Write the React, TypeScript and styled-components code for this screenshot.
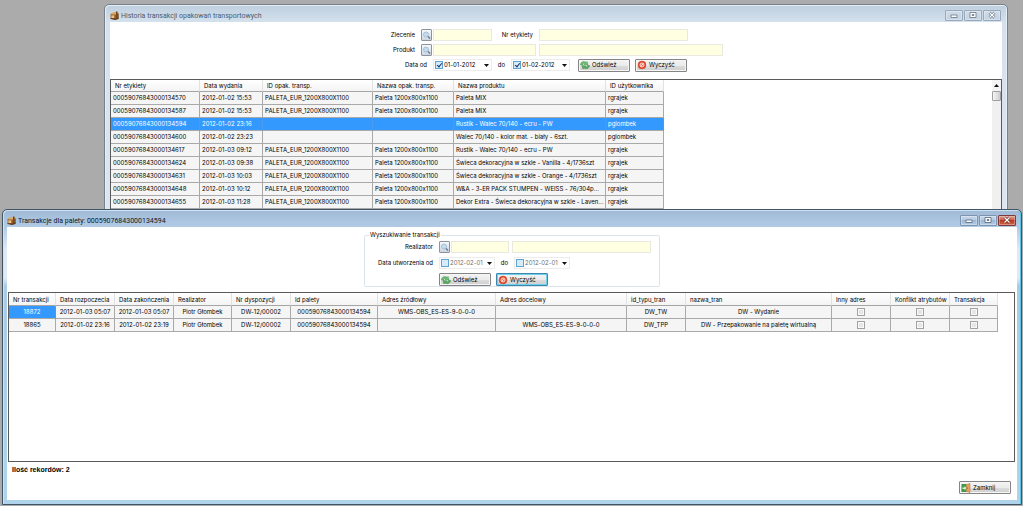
import React from "react";
import styled, { createGlobalStyle, css } from "styled-components";

const GlobalStyle = createGlobalStyle`
  *, *::before, *::after { box-sizing: border-box; }
  body { margin: 0; background: #ababab; }
  body, input, button, table, legend, label {
    font-family: Inter, "Liberation Sans", sans-serif;
    font-size: 6px;
    line-height: 12px;
    font-variant-ligatures: no-contextual;
    color: #000;
  }
`;

const Desktop = styled.div`
  position: relative;
  min-height: max(100vh, 400px);
  overflow: hidden;
`;

const Window = styled.section<{ $active?: boolean }>`
  position: absolute;
  display: flex;
  flex-direction: column;
  border: 1px solid ${(p) => (p.$active ? "#3f5566" : "#75808b")};
  border-radius: 5px 5px 0 0;
  padding: 0 4px 4px;
  background: ${(p) =>
    p.$active
      ? "linear-gradient(#a0bad6 0, #b3cce6 18px, #dfeaf6 40px, #dfeaf6 68px, #a9cbe6 76px, #b0d3ec 100%)"
      : "linear-gradient(#bfcfdf 0, #d5e2ee 18px, #dbe6f1 100%)"};
  box-shadow: inset 1px 1px 0 ${(p) => (p.$active ? "#cfe2f3" : "#e6eef6")}, inset -1px 0 0 ${(p) => (p.$active ? "#5cc3e6" : "#e6eef6")};
`;

const HistoryWindow = styled(Window)`
  top: 4px;
  left: 104px;
  right: 15px;
  padding: 0 5px 5px;
`;

const PalletWindow = styled(Window)`
  top: 209px;
  left: 2px;
  right: 1px;
  bottom: 1px;
`;

const TitleBar = styled.header`
  display: flex;
  align-items: center;
  gap: 2px;
  height: 17px;
`;

const Title = styled.h1<{ $active?: boolean }>`
  flex: 1;
  margin: 0;
  padding-top: 4px;
  font: 400 7px/12px Roboto, "Open Sans", sans-serif;
  color: ${(p) => (p.$active ? "#10161e" : "#4d5a68")};
  white-space: nowrap;
`;

const AppIcon = styled.svg`
  width: 9px;
  height: 9px;
  margin-top: 4px;
  flex: none;
`;

const Controls = styled.div`
  display: flex;
  gap: 1px;
  padding: 3px 1px 0 0;
`;

const ControlButton = styled.button<{ $active?: boolean; $close?: boolean }>`
  display: flex;
  align-items: center;
  justify-content: center;
  width: 18px;
  height: 11px;
  padding: 0;
  border: 1px solid ${(p) => (p.$active ? (p.$close ? "#7d3a3a" : "#7c94b0") : "#98a9bc")};
  border-radius: 1px;
  background: ${(p) =>
    p.$active
      ? p.$close
        ? "linear-gradient(#dc9c90, #c9604c 45%, #b83a20 50%, #d0664a)"
        : "linear-gradient(#c6d7ea, #b4c9e0 45%, #9cb7d4 50%, #b4cce4)"
      : "linear-gradient(#cfdbe8, #c3d2e2)"};
  box-shadow: inset 0 0 0 1px rgba(255, 255, 255, 0.3);
  svg { width: 10px; height: 8px; }
`;

const Client = styled.div`
  flex: 1;
  display: flex;
  flex-direction: column;
  min-height: 0;
  background: #fff;
`;

const Filters = styled.form`
  display: grid;
  gap: 3px;
  width: 332px;
  margin: 0 auto;
  padding: 7px 0 8px;
`;

const Row = styled.div`
  display: flex;
  align-items: center;
  height: 12px;
`;

const Label = styled.label<{ $w: number }>`
  flex: none;
  width: ${(p) => p.$w}px;
  padding-right: 6px;
  text-align: right;
  white-space: nowrap;
`;

const TextField = styled.input<{ $w: number }>`
  flex: none;
  width: ${(p) => p.$w}px;
  height: 12px;
  margin-right: 3px;
  padding: 0 2px;
  border: 1px solid #e9e9e0;
  background: #ffffe1;
`;

const LookupButton = styled.button`
  flex: none;
  width: 11px;
  height: 12px;
  margin-right: 1px;
  padding: 0;
  border: 1px solid #8d949c;
  border-radius: 1px;
  background: linear-gradient(#f6f8fa, #ccd6e2);
  svg { display: block; width: 9px; height: 10px; }
`;

const DateBox = styled.div<{ $w: number }>`
  display: flex;
  align-items: center;
  flex: none;
  width: ${(p) => p.$w}px;
  height: 12px;
  padding-left: 1px;
  border: 1px solid #ececec;
  background: #fff;
`;

const DateText = styled.input`
  flex: 1;
  min-width: 0;
  height: 10px;
  padding: 0 0 0 1px;
  border: 0;
  background: none;
  line-height: 10px;
  &:disabled { color: #707070; }
`;

const Tick = styled.input<{ $plain?: boolean }>`
  appearance: none;
  position: relative;
  display: block;
  flex: none;
  width: 8px;
  height: 8px;
  margin: 0;
  border: 1px solid ${(p) => (p.$plain ? "#a2a2a2" : "#5fa3d3")};
  background: ${(p) => (p.$plain ? "#e6e6e6" : "#d6ecfa")};
  ${(p) => p.$plain && css`
    margin: 0 auto;
    box-shadow: inset 0 0 0 1px #f8f8f8;
  `}
  &:checked::after {
    content: "";
    position: absolute;
    left: 2px;
    top: 0;
    width: 3px;
    height: 5px;
    border: solid #16306c;
    border-width: 0 1px 1px 0;
    transform: rotate(40deg);
  }
`;

const DropButton = styled.button`
  display: flex;
  align-items: center;
  justify-content: center;
  width: 9px;
  height: 10px;
  padding: 0;
  border: 0;
  background: none;
  svg { width: 5px; height: 3px; }
`;

const Until = styled.span`
  flex: none;
  width: 19px;
  text-align: center;
`;

const CommandButton = styled.button<{ $focused?: boolean }>`
  display: flex;
  align-items: center;
  flex: none;
  gap: 2px;
  width: 52px;
  height: 13px;
  padding: 0 2px 0 1px;
  border: 1px solid ${(p) => (p.$focused ? "#3b87ad" : "#858585")};
  border-radius: 1px;
  background: linear-gradient(#f3f3f3, #ebebeb 50%, #dcdcdc 52%, #cfcfcf);
  box-shadow: inset 0 0 0 1px ${(p) => (p.$focused ? "#6fd0ee" : "#f6f6f6")};
  line-height: 10px;
  svg { width: 10px; height: 10px; flex: none; }
`;

const Commands = styled.div`
  display: flex;
  gap: 5px;
`;

const DateCommands = styled(Commands)`
  margin-left: 8px;
`;

const GridFrame = styled.div`
  flex: 1;
  display: flex;
  justify-content: space-between;
  min-height: 140px;
  border: 1px solid #5a5a5a;
  background: #fff;
  overflow: hidden;
`;

const PalletGridFrame = styled(GridFrame)`
  min-height: 60px;
  margin: 0 2px 0 1px;
`;

const DataTable = styled.table<{ $centered?: boolean }>`
  flex: none;
  align-self: flex-start;
  table-layout: fixed;
  border-collapse: separate;
  border-spacing: 0;
  width: 0;
  td {
    padding: ${(p) => (p.$centered ? "0 1px" : "0 0 0 2px")};
    text-align: ${(p) => (p.$centered ? "center" : "left")};
  }
`;

const HeadCell = styled.th<{ $w: number; $h: number }>`
  width: ${(p) => p.$w}px;
  height: ${(p) => p.$h}px;
  padding: 0 0 0 4px;
  border-right: 1px solid #e2e2e2;
  border-bottom: 1px solid #a5a5a5;
  background: linear-gradient(#fff, #f4f4f4);
  font-weight: 400;
  line-height: 11px;
  text-align: left;
  white-space: nowrap;
`;

const Cell = styled.td<{ $selected?: boolean }>`
  height: 13px;
  border-right: 1px solid #a9a9a9;
  border-bottom: 1px solid #a9a9a9;
  background: #f5f5f5;
  overflow: hidden;
  white-space: nowrap;
  ${(p) => p.$selected && css`
    background: #3399ff;
    color: #fff;
    border-right-color: #4a9af0;
  `}
`;

const ScrollBar = styled.div`
  flex: none;
  width: 9px;
  background: #f0f0f0;
`;

const ScrollArrow = styled.button`
  display: flex;
  align-items: center;
  justify-content: center;
  width: 9px;
  height: 11px;
  padding: 0;
  border: 0;
  background: #f4f4f4;
  svg { width: 5px; height: 3px; }
`;

const ScrollThumb = styled.div`
  height: 10px;
  border: 1px solid #a0a0a0;
  border-radius: 1px;
  background: linear-gradient(90deg, #f5f5f5, #cfcfcf);
`;

const SearchGroup = styled.fieldset`
  width: 296px;
  min-width: 0;
  margin: 2px auto 5px;
  padding: 0;
  border: 1px solid #dce3ea;
  border-radius: 2px;
  legend {
    margin-left: 4px;
    padding: 0 1px;
  }
`;

const SearchRows = styled.div`
  display: grid;
  gap: 4px;
`;

const ButtonRow = styled(Commands)`
  padding-left: 74px;
`;

const Footer = styled.footer`
  display: flex;
  justify-content: space-between;
  align-items: flex-end;
  padding: 2px 6px 6px 5px;
  height: 38px;
`;

const RecordCount = styled.strong`
  align-self: flex-start;
  font: 700 7px/12px "Liberation Sans", sans-serif;
`;

const PackageIcon = () => (
  <AppIcon viewBox="0 0 18 18" aria-hidden="true">
    <path d="M1 6l8-3 8 1v11l-7 2-9-2z" fill="#a8743c" />
    <path d="M11 7l6-2v10l-6 2z" fill="#7b4a20" />
    <path d="M1 6l7-4 9 2-6 3z" fill="#dda968" />
    <path d="M3 9h5v5H3z" fill="#e9c48e" />
    <path d="M12 1h3v6h-3z" fill="#6c4119" />
    <path d="M1 14l10 1 6-2v3l-7 2-9-2z" fill="#5f3b1b" />
  </AppIcon>
);

const RefreshIcon = () => (
  <svg viewBox="0 0 20 20" aria-hidden="true">
    <path d="M1 10C1 4 8 1 12 5l2-2 2 7-8-1 2-2C8 6 6 7 5 10z" fill="#6cc072" stroke="#3f8f46" strokeWidth="1" />
    <path d="M19 11c0 6-7 8-11 5l-2 2-2-7 8 1-2 2c3 1 4 0 5-3z" fill="#58b05f" stroke="#35813d" strokeWidth="1" />
  </svg>
);

const ClearIcon = () => (
  <svg viewBox="0 0 20 20" aria-hidden="true">
    <circle cx="10" cy="10" r="8" fill="#e2482d" stroke="#cf4a33" />
    <circle cx="10" cy="10" r="4" fill="#f0755a" stroke="#fbd9d0" strokeWidth="2" />
    <path d="M7 13l6-6" stroke="#fbd9d0" strokeWidth="2" />
  </svg>
);

const ExitIcon = () => (
  <svg viewBox="0 0 20 20" aria-hidden="true">
    <path d="M1 2h10v16H1z" fill="#3c9a48" />
    <path d="M3 9h4V6l4 4-4 5v-3H3z" fill="#d4f2cf" />
    <path d="M11 3l7-2v18l-7-2z" fill="#e8a05c" stroke="#b96f2c" />
    <circle cx="13" cy="10" r="1" fill="#7c4413" />
  </svg>
);

const Lookup = ({ label }: { label: string }) => (
  <LookupButton type="button" aria-label={label}>
    <svg viewBox="0 0 18 20" aria-hidden="true">
      <circle cx="8" cy="9" r="5" fill="#c4dcf0" stroke="#a9bfd4" strokeWidth="2" />
      <path d="M12 13l4 4" stroke="#66788c" strokeWidth="3" />
    </svg>
  </LookupButton>
);

const Triangle = ({ up }: { up?: boolean }) => (
  <svg viewBox="0 0 10 6" aria-hidden="true">
    <path d={up ? "M0 6h10L5 0z" : "M0 0h10L5 6z"} fill="#111" />
  </svg>
);

const WindowControls = ({ active }: { active?: boolean }) => {
  const line = active ? "#4b5c70" : "#5e6d7e";
  return (
    <Controls>
      <ControlButton type="button" $active={active} aria-label="Minimalizuj">
        <svg viewBox="0 0 20 16" aria-hidden="true">
          <path d="M4 8h12v5H4z" fill="#fff" stroke={line} strokeWidth="1.500" />
        </svg>
      </ControlButton>
      <ControlButton type="button" $active={active} aria-label="Maksymalizuj">
        <svg viewBox="0 0 20 16" aria-hidden="true">
          <path d="M4 3h12v10H4z" fill="#fff" stroke={line} strokeWidth="1.500" />
          <path d="M8 7h4v2H8z" fill={line} stroke={line} />
        </svg>
      </ControlButton>
      <ControlButton type="button" $active={active} $close aria-label="Zamknij okno">
        <svg viewBox="0 0 20 16" aria-hidden="true">
          <path d="M5 3l10 10M15 3L5 13" stroke={active ? "#6b2a20" : line} strokeWidth="5" />
          <path d="M5 3l10 10M15 3L5 13" stroke="#fff" strokeWidth="2.500" />
        </svg>
      </ControlButton>
    </Controls>
  );
};

interface DateFieldProps {
  id: string;
  value: string;
  width: number;
  enabled?: boolean;
  label?: string;
}

const DateField = ({ id, value, width, enabled, label }: DateFieldProps) => (
  <DateBox $w={width}>
    <Tick type="checkbox" defaultChecked={enabled} aria-label={`Użyj daty ${value}`} />
    <DateText id={id} defaultValue={value} disabled={!enabled} aria-label={label} />
    <DropButton type="button" aria-label="Otwórz kalendarz">
      <Triangle />
    </DropButton>
  </DateBox>
);

const historyColumns: [string, number][] = [
  ["Nr etykiety", 89],
  ["Data wydania", 63],
  ["ID opak. transp.", 110],
  ["Nazwa opak. transp.", 81],
  ["Nazwa produktu", 152],
  ["ID użytkownika", 58],
];

const EUR = "PALETA_EUR_1200X800X1100";
const PAL = "Paleta 1200x800x1100";

const historyRows = [
  ["00059076843000134570", "2012-01-02 15:53", EUR, PAL, "Paleta MIX", "rgrajek"],
  ["00059076843000134587", "2012-01-02 15:53", EUR, PAL, "Paleta MIX", "rgrajek"],
  ["00059076843000134594", "2012-01-02 23:16", "", "", "Rustik - Walec 70/140 - ecru - PW", "pglombek"],
  ["00059076843000134600", "2012-01-02 23:23", "", "", "Walec 70/140 - kolor mat. - biały - 6szt.", "pglombek"],
  ["00059076843000134617", "2012-01-03 09:12", EUR, PAL, "Rustik - Walec 70/140 - ecru - PW", "rgrajek"],
  ["00059076843000134624", "2012-01-03 09:38", EUR, PAL, "Świeca dekoracyjna w szkle - Vanilla - 4/1736szt", "rgrajek"],
  ["00059076843000134631", "2012-01-03 10:03", EUR, PAL, "Świeca dekoracyjna w szkle - Orange - 4/1736szt", "rgrajek"],
  ["00059076843000134648", "2012-01-03 10:12", EUR, PAL, "W&A - 3-ER PACK STUMPEN - WEISS - 76/304p...", "rgrajek"],
  ["00059076843000134655", "2012-01-03 11:28", EUR, PAL, "Dekor Extra - Świeca dekoracyjna w szkle - Laven...", "rgrajek"],
];

const palletColumns: [string, number][] = [
  ["Nr transakcji", 47],
  ["Data rozpoczecia", 59],
  ["Data zakończenia", 59],
  ["Realizator", 58],
  ["Nr dyspozycji", 59],
  ["Id palety", 87],
  ["Adres źródłowy", 118],
  ["Adres docelowy", 131],
  ["id_typu_tran", 59],
  ["nazwa_tran", 146],
  ["Inny adres", 59],
  ["Konflikt atrybutów", 59],
  ["Transakcja", 48],
];

const palletRows = [
  ["18872", "2012-01-03 05:07", "2012-01-03 05:07", "Piotr Głombek", "DW-12/00002", "00059076843000134594", "WMS-OBS_ES-ES-9-0-0-0", "", "DW_TW", "DW - Wydanie"],
  ["18865", "2012-01-02 23:16", "2012-01-02 23:19", "Piotr Głombek", "DW-12/00002", "00059076843000134594", "", "WMS-OBS_ES-ES-9-0-0-0", "DW_TPP", "DW - Przepakowanie na paletę wirtualną"],
];

const Head = ({ columns, height }: { columns: [string, number][]; height: number }) => (
  <thead>
    <tr>
      {columns.map(([name, width]) => (
        <HeadCell key={name} scope="col" $w={width} $h={height}>
          {name}
        </HeadCell>
      ))}
    </tr>
  </thead>
);

const History = () => (
  <HistoryWindow>
    <TitleBar>
      <PackageIcon />
      <Title>Historia transakcji opakowań transportowych</Title>
      <WindowControls />
    </TitleBar>
    <Client>
      <Filters>
        <Row>
          <Label $w={31} htmlFor="order">Zlecenie</Label>
          <Lookup label="Szukaj zlecenia" />
          <TextField id="order" $w={59} />
          <Label $w={44} htmlFor="tag">Nr etykiety</Label>
          <TextField id="tag" $w={149} />
        </Row>
        <Row>
          <Label $w={31} htmlFor="product">Produkt</Label>
          <Lookup label="Szukaj produktu" />
          <TextField id="product" $w={103} />
          <TextField $w={184} aria-label="Nazwa produktu" />
        </Row>
        <Row>
          <Label $w={43} htmlFor="from">Data od</Label>
          <DateField id="from" value="01-01-2012" width={59} enabled />
          <Until>do</Until>
          <DateField id="to" value="01-02-2012" width={59} enabled label="Data do" />
          <DateCommands>
            <CommandButton type="button"><RefreshIcon />Odśwież</CommandButton>
            <CommandButton type="button"><ClearIcon />Wyczyść</CommandButton>
          </DateCommands>
        </Row>
      </Filters>
      <GridFrame>
        <DataTable>
          <Head columns={historyColumns} height={12} />
          <tbody>
            {historyRows.map((row, r) => (
              <tr key={row[0]}>
                {row.map((text, c) => (
                  <Cell key={c} $selected={r === 2}>{text}</Cell>
                ))}
              </tr>
            ))}
          </tbody>
        </DataTable>
        <ScrollBar>
          <ScrollArrow type="button" aria-label="Przewiń w górę"><Triangle up /></ScrollArrow>
          <ScrollThumb />
        </ScrollBar>
      </GridFrame>
    </Client>
  </HistoryWindow>
);

const Pallet = () => (
  <PalletWindow $active>
    <TitleBar>
      <PackageIcon />
      <Title $active>Transakcje dla palety: 00059076843000134594</Title>
      <WindowControls active />
    </TitleBar>
    <Client>
      <SearchGroup>
        <legend>Wyszukiwanie transakcji</legend>
        <SearchRows>
          <Row>
            <Label $w={74} htmlFor="person">Realizator</Label>
            <Lookup label="Szukaj realizatora" />
            <TextField id="person" $w={58} />
            <TextField $w={139} aria-label="Nazwa realizatora" />
          </Row>
          <Row>
            <Label $w={74} htmlFor="created-from">Data utworzenia od</Label>
            <DateField id="created-from" value="2012-02-01" width={56} />
            <Until>do</Until>
            <DateField id="created-to" value="2012-02-01" width={56} label="Data utworzenia do" />
          </Row>
          <ButtonRow>
            <CommandButton type="button"><RefreshIcon />Odśwież</CommandButton>
            <CommandButton type="button" $focused><ClearIcon />Wyczyść</CommandButton>
          </ButtonRow>
        </SearchRows>
      </SearchGroup>
      <PalletGridFrame>
        <DataTable $centered>
          <Head columns={palletColumns} height={13} />
          <tbody>
            {palletRows.map((row, r) => (
              <tr key={row[0]}>
                {row.map((text, c) => (
                  <Cell key={c} $selected={r === 0 && c === 0}>{text}</Cell>
                ))}
                {palletColumns.slice(10).map(([name]) => (
                  <Cell key={name}>
                    <Tick type="checkbox" $plain aria-label={`${name} ${row[0]}`} />
                  </Cell>
                ))}
              </tr>
            ))}
          </tbody>
        </DataTable>
      </PalletGridFrame>
      <Footer>
        <RecordCount>Ilość rekordów: 2</RecordCount>
        <CommandButton type="button"><ExitIcon />Zamknij</CommandButton>
      </Footer>
    </Client>
  </PalletWindow>
);

export default function App() {
  return (
    <Desktop>
      <GlobalStyle />
      <History />
      <Pallet />
    </Desktop>
  );
}
